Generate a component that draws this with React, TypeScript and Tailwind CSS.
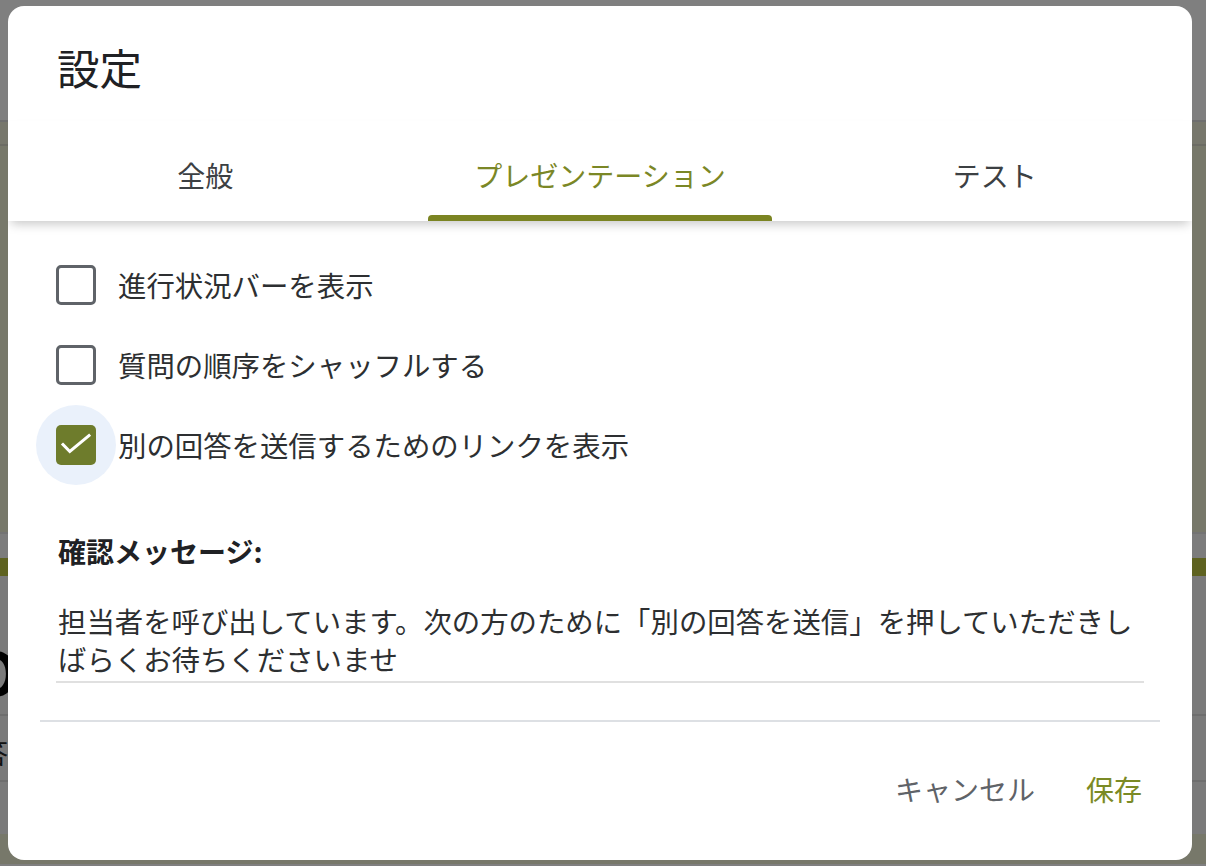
import React, { useState } from "react";

const tabs = ["全般", "プレゼンテーション", "テスト"];

function CheckRow({
  label,
  checked,
  onToggle,
}: {
  label: string;
  checked: boolean;
  onToggle: () => void;
}) {
  return (
    <div className="flex h-[80px] items-center">
      <button
        onClick={onToggle}
        className={`flex h-[80px] w-[80px] items-center justify-center rounded-full ${
          checked ? "bg-[#eaf1fb]" : ""
        }`}
      >
        {checked ? (
          <span className="flex h-[40px] w-[40px] items-center justify-center rounded-[5px] bg-[#6e7c2c]">
            <svg width="40" height="40" viewBox="0 0 40 40" fill="none">
              <path
                d="M7 19.5l6.8 7L33 10.5"
                stroke="white"
                strokeWidth="3"
                strokeLinecap="square"
              />
            </svg>
          </span>
        ) : (
          <span className="h-[40px] w-[40px] rounded-[5px] border-[3px] border-[#5f6368]" />
        )}
      </button>
      <span className="ml-[2px] text-[28.4px] leading-none text-[#2d2f31]">{label}</span>
    </div>
  );
}

export default function App() {
  const [active, setActive] = useState(1);
  const [checks, setChecks] = useState([false, false, true]);
  const labels = [
    "進行状況バーを表示",
    "質問の順序をシャッフルする",
    "別の回答を送信するためのリンクを表示",
  ];

  return (
    <div className="relative h-[866px] w-full overflow-hidden bg-white font-['Noto_Sans_CJK_JP',sans-serif]">
      {/* page behind the dialog */}
      <div className="flex flex-col">
        <div className="h-[122px] border-b-2 border-[#dcdcdc] bg-white" />
        <div className="h-[24px] border-b-2 border-[#d8d8c8] bg-[#eeefd8]" />
        <div className="h-[388px] border-b-2 border-[#e6e6e6] bg-[#eff0d5]" />
        <div className="h-[24px] bg-[#f8f8f8]" />
        <div className="h-[18px] bg-[#bcc441]" />
        <div className="flex h-[140px] items-center border-b-2 border-[#dcdcdc] bg-[#f4f4f4]">
          <span className="-ml-[28px] mt-[50px] text-[60px] font-bold text-black">O</span>
        </div>
        <div className="flex h-[66px] items-center border-b-2 border-[#dcdcdc] bg-[#f4f4f4]">
          <span className="-ml-[20px] mt-[8px] text-[28px] text-[#222]">答</span>
        </div>
        <div className="h-[52px] bg-[#f4f4f4]" />
        <div className="h-[30px] bg-[#eff0d5]" />
      </div>
      <div className="absolute inset-0 bg-black/50" />

      {/* dialog */}
      <div className="absolute left-[8px] top-[6px] flex h-[854px] w-[1184px] flex-col overflow-hidden rounded-[16px] bg-white">
        <div className="h-[115px] pl-[49px] pt-[40px]">
          <h1 className="text-[42.5px] leading-none text-[#202124]">設定</h1>
        </div>

        <div className="relative z-10 grid h-[100px] grid-cols-3 shadow-[0_6px_10px_-3px_rgba(0,0,0,0.22)]">
          {tabs.map((t, i) => (
            <button
              key={t}
              onClick={() => setActive(i)}
              className="relative flex items-center justify-center pt-2"
            >
              <span
                className={`text-[28px] leading-none ${
                  active === i ? "text-[#7b8726]" : "text-[#3c4043]"
                }`}
              >
                {t}
              </span>
              {active === i && (
                <span className="absolute bottom-0 left-[25px] right-[25px] h-[6px] rounded-t-[4px] bg-[#7b8422]" />
              )}
            </button>
          ))}
        </div>

        <div className="flex flex-col pl-[28px] pt-[24px]">
          {labels.map((l, i) => (
            <CheckRow
              key={l}
              label={l}
              checked={checks[i]}
              onToggle={() =>
                setChecks(checks.map((c, j) => (j === i ? !c : c)))
              }
            />
          ))}
        </div>

        <div className="px-[48px] pt-[52px]">
          <p className="pl-[2px] text-[28px] font-bold leading-none text-[#202124]">
            確認メッセージ:
          </p>
          <div className="mt-[37px] border-b-2 border-[#e0e0e0] pb-[3px] pl-[2px] text-[28.4px] leading-[38px] text-[#2d2f31]">
            担当者を呼び出しています。次の方のために「別の回答を送信」を押していただきしばらくお待ちくださいませ
          </div>
        </div>

        <div className="mx-[32px] mt-[37px] h-[2px] bg-[#dde0e4]" />

        <div className="flex justify-end gap-[51px] pr-[50px] pt-[53px]">
          <button className="text-[28px] leading-none text-[#5f6368]">キャンセル</button>
          <button className="text-[28px] leading-none text-[#7b8a25]">保存</button>
        </div>
      </div>
    </div>
  );
}
